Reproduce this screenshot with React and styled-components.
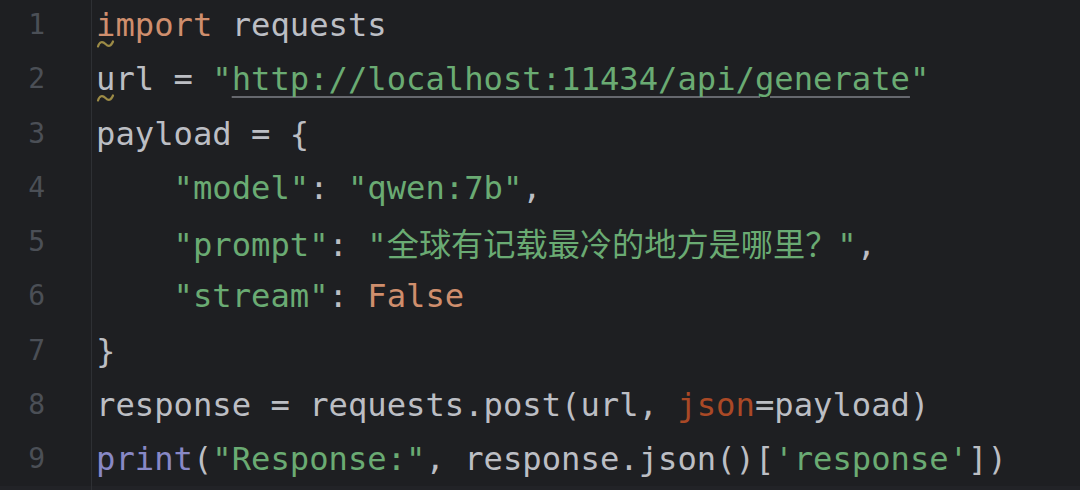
import React from "react";
import styled, { createGlobalStyle } from "styled-components";

const GlobalStyle = createGlobalStyle`
	html, body {
		margin: 0;
		padding: 0;
		background: #1e1f22;
	}
`;

const colors = {
	text: "#bcbec4",
	keyword: "#cf8e6d",
	string: "#6aab73",
	builtin: "#8888c6",
	param: "#aa4926",
};

const Frame = styled.div`
	width: 1080px;
	height: 490px;
	display: flex;
	flex-flow: column nowrap;
	background: #1e1f22;
	overflow: hidden;
`;

const Editor = styled.div`
	display: flex;
	flex-flow: row nowrap;
	height: 486px;
`;

const Strip = styled.div`
	flex: 1;
	display: flex;
	div.gutter-end {
		width: 91px;
		border-right: 1px solid #2e3034;
	}
	background: #222327;
`;

const Gutter = styled.div`
	width: 91px;
	flex: none;
	border-right: 1px solid #2e3034;
	display: flex;
	flex-flow: column nowrap;
	margin-top: -2px;
`;

const LineNo = styled.div`
	height: 54.25px;
	line-height: 54.25px;
	padding-right: 46px;
	text-align: right;
	font-family: "DejaVu Sans Mono", monospace;
	font-size: 28px;
	color: #4b4f56;
`;

const Code = styled.div`
	flex: 1;
	padding-left: 4px;
	display: flex;
	flex-flow: column nowrap;
	margin-top: -2px;
`;

const Line = styled.div`
	height: 54.25px;
	line-height: 54.25px;
	white-space: pre;
	font-family: "DejaVu Sans Mono", monospace;
	font-size: 32.2px;
	color: ${colors.text};
`;

const Tok = styled.span`
	color: ${(p) => colors[p.$kind] || colors.text};
`;

const Link = styled.span`
	text-decoration: underline;
	text-decoration-color: #66686e;
	text-decoration-thickness: 2px;
	text-underline-offset: 6px;
`;

const Cjk = styled.span`
	font-family: "Noto Sans CJK SC", sans-serif;
	font-size: 32.2px;
`;

const Warn = styled.span`
	position: relative;
	svg {
		position: absolute;
		left: 0;
		top: 33px;
	}
`;

const Squiggle = () => (
	<svg width="19" height="10" viewBox="0 0 19 10">
		<path
			d="M2 7.5 C3.5 2.5, 6.5 2, 9.5 5 C12.5 8, 15 7.5, 17 2.5"
			fill="none"
			stroke="#9c8b46"
			strokeWidth="2.2"
			strokeLinecap="round"
		/>
	</svg>
);

const lines = [
	<>
		<Warn>
			<Tok $kind="keyword">i</Tok>
			<Squiggle />
		</Warn>
		<Tok $kind="keyword">mport</Tok> requests
	</>,
	<>
		<Warn>
			u<Squiggle />
		</Warn>
		rl = <Tok $kind="string">"<Link>http://localhost:11434/api/generate</Link>"</Tok>
	</>,
	<>payload = {"{"}</>,
	<>
		{"    "}
		<Tok $kind="string">"model"</Tok>: <Tok $kind="string">"qwen:7b"</Tok>,
	</>,
	<>
		{"    "}
		<Tok $kind="string">"prompt"</Tok>:{" "}
		<Tok $kind="string">
			"<Cjk>全球有记载最冷的地方是哪里？</Cjk>"
		</Tok>
		,
	</>,
	<>
		{"    "}
		<Tok $kind="string">"stream"</Tok>: <Tok $kind="keyword">False</Tok>
	</>,
	<>{"}"}</>,
	<>
		response = requests.post(url, <Tok $kind="param">json</Tok>=payload)
	</>,
	<>
		<Tok $kind="builtin">print</Tok>(<Tok $kind="string">"Response:"</Tok>, response.json()[
		<Tok $kind="string">'response'</Tok>])
	</>,
];

const App = () => {
	return (
		<Frame>
			<GlobalStyle />
			<Editor>
				<Gutter>
					{lines.map((_, i) => (
						<LineNo key={i}>{i + 1}</LineNo>
					))}
				</Gutter>
				<Code>
					{lines.map((content, i) => (
						<Line key={i}>{content}</Line>
					))}
				</Code>
			</Editor>
			<Strip>
				<div className="gutter-end" />
			</Strip>
		</Frame>
	);
};

export default App;
